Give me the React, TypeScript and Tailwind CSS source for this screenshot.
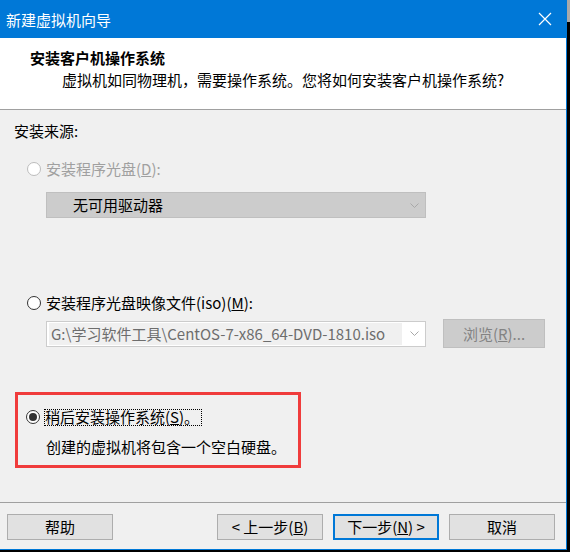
import React from 'react';

const font = { fontFamily: '"Noto Sans CJK SC", "Noto Sans", sans-serif' };

function Radio({ state }: { state: 'disabled' | 'off' | 'on' }) {
  if (state === 'disabled') {
    return <span className="w-[14px] h-[14px] rounded-full border border-[#bcbcbc] bg-white shrink-0" />;
  }
  return (
    <span className="w-[14px] h-[14px] rounded-full border border-[#333333] bg-white shrink-0 flex items-center justify-center">
      {state === 'on' && <span className="w-[8px] h-[8px] rounded-full bg-[#333333]" />}
    </span>
  );
}

function Chevron({ color }: { color: string }) {
  return (
    <svg width="9" height="5" viewBox="0 0 9 5" fill="none">
      <path d="M0.5 0.5 L4.5 4.5 L8.5 0.5" stroke={color} strokeWidth="1" />
    </svg>
  );
}

function Btn({ children, primary }: { children: React.ReactNode; primary?: boolean }) {
  return (
    <div
      className={
        'w-[106px] h-[26px] bg-[#e1e1e1] flex items-center justify-center text-[15px] leading-[20px] text-black ' +
        (primary ? 'border-2 border-[#0078d7]' : 'border border-[#adadad]')
      }
    >
      {children}
    </div>
  );
}

export default function App() {
  return (
    <div className="w-[570px] h-[552px] bg-black flex overflow-hidden" style={font}>
      <div className="w-[567px] h-[550px] bg-[#f0f0f0] border-r border-b border-[#0078d7] flex flex-col">
        {/* title bar */}
        <div className="h-[38px] bg-[#0078d7] flex items-center justify-between shrink-0">
          <span className="pl-[6px] text-white text-[15px] leading-[20px] mt-[2px]">新建虚拟机向导</span>
          <svg width="14" height="14" viewBox="0 0 14 14" className="mr-[14px]">
            <path d="M1 1 L13 13 M13 1 L1 13" stroke="white" strokeWidth="1.2" />
          </svg>
        </div>

        {/* header */}
        <div className="h-[72px] bg-white border-b border-[#a0a0a0] shrink-0 pt-[10px]">
          <div className="pl-[30px] text-[15px] leading-[20px] font-bold text-black">安装客户机操作系统</div>
          <div className="pl-[62px] mt-[2px] text-[15px] leading-[20px] text-black">
            虚拟机如同物理机，需要操作系统。您将如何安装客户机操作系统?
          </div>
        </div>

        {/* body */}
        <div className="flex-1 flex flex-col pl-[14px] text-[15px] leading-[20px] text-black">
          <div className="mt-[11px]">安装来源:</div>

          <div className="mt-[18px] flex items-center h-[20px] pl-[13px] gap-[5px]">
            <Radio state="disabled" />
            <span className="text-[#a0a0a0]">
              安装程序光盘(<span className="underline">D</span>):
            </span>
          </div>

          <div className="mt-[13px] ml-[32px] w-[380px] h-[26px] bg-[#cccccc] border border-[#bfbfbf] flex items-center justify-between pl-[26px] pr-[6px]">
            <span>无可用驱动器</span>
            <Chevron color="#a8a8a8" />
          </div>

          <div className="mt-[75px] flex items-center h-[20px] pl-[13px] gap-[5px]">
            <Radio state="off" />
            <span>
              安装程序光盘映像文件(iso)(<span className="underline">M</span>):
            </span>
          </div>

          <div className="mt-[6px] ml-[32px] flex items-center h-[29px] gap-[17px]">
            <div className="w-[380px] h-[26px] bg-white border border-[#cccccc] flex items-center justify-between pl-[2px] pr-[6px]">
              <span className="w-[353px] h-[22px] bg-[#f0f0f0] text-[#6d6d6d] flex items-center pl-[2px] whitespace-nowrap overflow-hidden">
                G:\学习软件工具\CentOS-7-x86_64-DVD-1810.iso
              </span>
              <Chevron color="#a8a8a8" />
            </div>
            <div className="w-[102px] h-[29px] bg-[#cccccc] border border-[#bfbfbf] flex items-center justify-center text-[#838383]">
              浏览(<span className="underline">R</span>)...
            </div>
          </div>

          <div className="mt-[44px] ml-[1px] w-[286px] h-[76px] border-[3px] border-[#f03c3c] pt-[12px]">
            <div className="flex items-center h-[20px] pl-[8px] gap-[4px]">
              <Radio state="on" />
              <span className="border border-dotted border-black h-[17px] flex items-center pr-[2px]">
                稍后安装操作系统(<span className="underline">S</span>)。
              </span>
            </div>
            <div className="mt-[10px] pl-[28px]">创建的虚拟机将包含一个空白硬盘。</div>
          </div>
        </div>

        {/* footer */}
        <div className="shrink-0 border-t border-[#a0a0a0] h-[47px] pt-[11px] px-[7px] flex items-start">
          <Btn>帮助</Btn>
          <div className="ml-auto flex gap-[10px] mr-[4px]">
            <Btn>
              &lt; 上一步(<span className="underline">B</span>)
            </Btn>
            <Btn primary>
              下一步(<span className="underline">N</span>) &gt;
            </Btn>
            <Btn>取消</Btn>
          </div>
        </div>
      </div>
      <div className="w-[3px] flex flex-col">
        <div className="h-[22px] bg-[#a9a9a9]" />
      </div>
    </div>
  );
}
